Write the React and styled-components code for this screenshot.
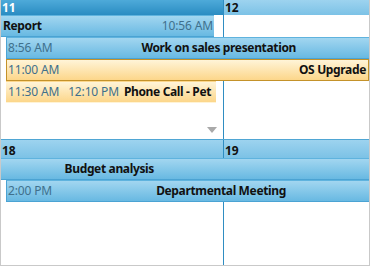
import React from 'react';
import styled, { createGlobalStyle, css } from 'styled-components';

const Global = createGlobalStyle`
  html, body { margin: 0; padding: 0; background: #fff; }
  body { font-family: "Noto Sans", "Open Sans", sans-serif; font-size: 12px; }
  #root { width: 370px; height: 266px; }
`;

const Calendar = styled.div`
  width: 370px;
  height: 266px;
  box-sizing: border-box;
  border: 1px solid #c9c9c9;
  border-top: none;
  display: flex;
  flex-direction: column;
  overflow: hidden;
  background: #fff;
`;

const Week = styled.div`
  display: grid;
  grid-template-columns: 223px 1fr;
  grid-template-rows: ${(p) => p.$header}px repeat(${(p) => p.$rows}, 22px) 1fr;
  height: ${(p) => p.$height}px;
  flex: none;
  box-sizing: border-box;
  border-bottom: ${(p) => (p.$last ? 'none' : '1px solid #4fa6d4')};
`;

const DayColumn = styled.div`
  grid-row: 1 / -1;
  grid-column: ${(p) => p.$col};
  display: flex;
  flex-direction: column;
  min-width: 0;
  box-sizing: border-box;
  border-right: ${(p) => (p.$divider ? '1px solid #2f8dc2' : 'none')};
`;

const DayHeader = styled.div`
  flex: none;
  height: ${(p) => p.$height}px;
  box-sizing: border-box;
  display: flex;
  align-items: flex-end;
  padding: 0 0 0 1px;
  font-weight: 700;
  font-size: 12px;
  line-height: 15px;
  letter-spacing: -0.2px;
  ${(p) =>
    p.$selected
      ? css`
          background: linear-gradient(#4eaad9, #2a8cc2);
          color: #fff;
        `
      : css`
          background: linear-gradient(#9dd3ef, #7cc2e6);
          color: #111;
        `}
`;

const MoreArrow = styled.div`
  margin-top: auto;
  align-self: flex-end;
  margin-right: 6px;
  margin-bottom: 6px;
  width: 0;
  height: 0;
  border-left: 5px solid transparent;
  border-right: 5px solid transparent;
  border-top: 6px solid #a9a9a9;
`;

const Bar = styled.div`
  grid-row: ${(p) => p.$row};
  grid-column: ${(p) => p.$cols};
  margin-left: ${(p) => p.$ml}px;
  margin-right: ${(p) => p.$mr}px;
  min-width: 0;
  box-sizing: border-box;
  display: flex;
  align-items: center;
  overflow: hidden;
  white-space: nowrap;
  padding-left: ${(p) => p.$pl}px;
  font-size: 12px;
  line-height: 16px;
  ${(p) =>
    p.$tone === 'orange'
      ? css`
          background: linear-gradient(#fff4d8, #fcd68a);
          border: 1px solid ${p.$selected ? '#c4922a' : 'transparent'};
        `
      : css`
          background: linear-gradient(#a2d6f0, #68b9e2);
          border-top: 1px solid #5fb3de;
          border-bottom: 1px solid #4ba3d3;
          border-left: ${p.$open ? 'none' : '1px solid #4ba3d3'};
        `}
`;

const Time = styled.span`
  flex: none;
  color: #40708c;
  letter-spacing: -0.15px;
  margin-left: ${(p) => p.$gap || 0}px;
  margin-right: ${(p) => p.$mr || 0}px;
`;

const TrailingTime = styled(Time)`
  margin-left: auto;
`;

const Title = styled.span`
  flex: none;
  font-weight: 700;
  color: #111;
  letter-spacing: -0.35px;
  margin-left: ${(p) => (p.$gap != null ? `${p.$gap}px` : 'auto')};
  margin-right: ${(p) => p.$mr || 0}px;
`;

export default function App() {
  return (
    <>
      <Global />
      <Calendar>
        <Week $header={15} $rows={4} $height={140}>
          <DayColumn $col={1} $divider>
            <DayHeader $height={15} $selected>11</DayHeader>
            <MoreArrow />
          </DayColumn>
          <DayColumn $col={2}>
            <DayHeader $height={15}>12</DayHeader>
          </DayColumn>

          <Bar $row={2} $cols="1 / 2" $ml={-1} $mr={10} $pl={3} $open>
            <Title $gap={0}>Report</Title>
            <TrailingTime $mr={1}>10:56 AM</TrailingTime>
          </Bar>
          <Bar $row={3} $cols="1 / 3" $ml={5} $mr={0} $pl={1}>
            <Time>8:56 AM</Time>
            <Title $mr={73}>Work on sales presentation</Title>
          </Bar>
          <Bar $row={4} $cols="1 / 3" $ml={5} $mr={0} $pl={1} $tone="orange" $selected>
            <Time>11:00 AM</Time>
            <Title $mr={2}>OS Upgrade</Title>
          </Bar>
          <Bar $row={5} $cols="1 / 2" $ml={5} $mr={8} $pl={1} $tone="orange">
            <Time>11:30 AM</Time>
            <Time $gap={9}>12:10 PM</Time>
            <Title $gap={5}>Phone Call - Pet</Title>
          </Bar>
        </Week>

        <Week $header={18} $rows={2} $height={125} $last>
          <DayColumn $col={1} $divider>
            <DayHeader $height={18}>18</DayHeader>
          </DayColumn>
          <DayColumn $col={2}>
            <DayHeader $height={18}>19</DayHeader>
          </DayColumn>

          <Bar $row={2} $cols="1 / 3" $ml={-1} $mr={0} $pl={0} $open>
            <Title $mr={215}>Budget analysis</Title>
          </Bar>
          <Bar $row={3} $cols="1 / 3" $ml={5} $mr={0} $pl={1}>
            <Time>2:00 PM</Time>
            <Title $mr={83}>Departmental Meeting</Title>
          </Bar>
        </Week>
      </Calendar>
    </>
  );
}
